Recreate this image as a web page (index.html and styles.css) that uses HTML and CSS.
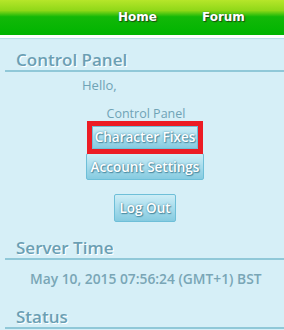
FILE: index.html
```html
<!DOCTYPE html>
<html lang="en">
<head>
    <meta charset="UTF-8">
    <title>Control Panel</title>
    <link rel="stylesheet" href="styles.css">
</head>
<body>
    <div class="topbar">
        <a href="#" class="nav-link">Home</a>
        <a href="#" class="nav-link">Forum</a>
    </div>

    <div class="content">
        <h2 class="section-title">Control Panel</h2>
        <p class="hello">Hello,</p>

        <div class="panel">
            <span class="panel-label">Control Panel</span>
            <span class="marker">
                <a href="#" class="btn btn-marked">Character Fixes</a>
            </span>
            <a href="#" class="btn btn-account">Account Settings</a>
            <a href="#" class="btn btn-logout">Log Out</a>
        </div>

        <h2 class="section-title">Server Time</h2>
        <p class="server-time">May 10, 2015 07:56:24 (GMT+1) BST</p>

        <h2 class="section-title">Status</h2>
    </div>
</body>
</html>
```

FILE: styles.css
```css
/* Basic styles */
body {
    margin: 0;
    background-color: #d6eff7;
    font-family: "Open Sans", "DejaVu Sans", sans-serif;
    color: #6fa3b6;
}

/* Top bar */
.topbar {
    height: 35px;
    display: flex;
    padding-left: 118px;
    gap: 45px;
    align-items: flex-start;
    background: linear-gradient(to bottom, #b6e62a 0%, #8fd818 30%, #12b808 48%, #00b400 100%);
    border-bottom: 3px solid #fff;
    box-shadow: 0 1px 0 #b9dfea;
}
.nav-link {
    margin-top: 10px;
    color: #fff;
    font-family: "DejaVu Sans", sans-serif;
    font-weight: bold;
    font-size: 12px;
    text-decoration: none;
    text-shadow: 1px 1px 1px #1c4a10, 0 0 1px #2b5a20;
}

/* Sections */
.content {
    padding: 12px 0 0 5px;
}
.section-title {
    margin: 0;
    padding: 0 0 0 11px;
    font-size: 17px;
    font-weight: 600;
    line-height: 20px;
    color: #6b9fb4;
    text-shadow: 1px 1px 0 #fff;
    border-bottom: 2px solid #90c8d8;
}
.hello {
    margin: 5px 0 0 77px;
    font-size: 13px;
    line-height: 16px;
}

.panel {
    display: flex;
    flex-direction: column;
    align-items: center;
    padding: 15px 0 16px 6px;
    margin-left: -5px;
}
.panel-label {
    font-size: 12.5px;
    line-height: 12px;
    margin-left: 2px;
}

/* Buttons */
.btn {
    display: inline-block;
    padding: 3px 4px;
    font-family: "Open Sans", sans-serif;
    font-size: 13.5px;
    font-weight: 600;
    line-height: 18px;
    color: #fff;
    text-decoration: none;
    text-shadow: 0 0 2px #4a8aa0, 1px 1px 1px #4a8aa0;
    background: linear-gradient(to bottom, #cdedf6 0%, #a8dcec 50%, #86cbe0 100%);
    border: 1px solid #6ebfd8;
    border-radius: 2px;
}

/* red highlight box around the selected entry */
.marker {
    position: relative;
    z-index: 1;
    margin-top: 1px;
    display: flex;
    border: 5px solid #ec1c24;
}
.btn-marked {
    padding: 2px 2px;
    line-height: 17px;
    border-radius: 0;
}
.btn-account {
    margin-top: -1px;
    padding: 4px 4px 3px;
}
.btn-logout {
    margin-top: 14px;
    padding: 4px 4px;
}

.server-time {
    margin: 11px 0 20px 25px;
    font-size: 13.8px;
    font-weight: 600;
    line-height: 16px;
    color: #79a6b6;
}
```
